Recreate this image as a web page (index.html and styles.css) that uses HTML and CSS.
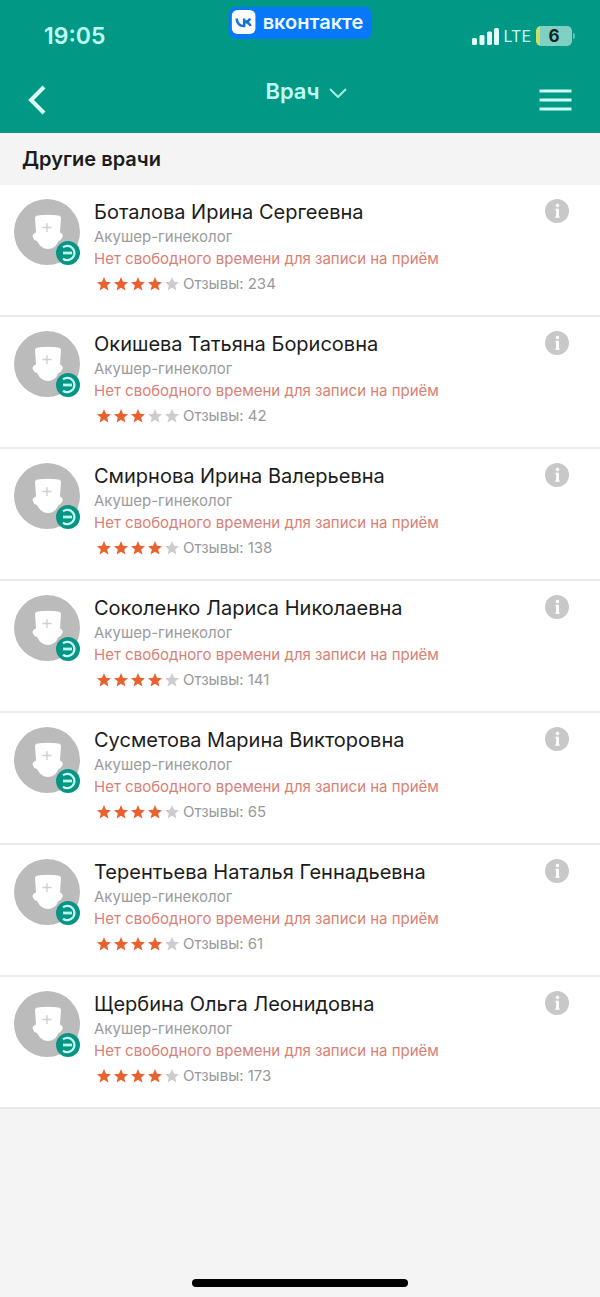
FILE: index.html
```html
<!DOCTYPE html>
<html lang="ru">
<head>
<meta charset="utf-8">
<meta name="viewport" content="width=device-width, initial-scale=1">
<title>Врач</title>
<link rel="stylesheet" href="styles.css">
</head>
<body>
<svg class="sprite" aria-hidden="true">
  <symbol id="avatar" viewBox="0 0 66 66">
    <circle cx="33" cy="33" r="33" fill="#bbb"/>
    <path d="M21 19Q21 17 24 16.500Q34 15 44 16.500Q47 17 47 19L46 33.500Q49.500 35 48.500 38Q47.500 41 44.500 42Q41 50 34 50Q27 50 23 42Q19.500 41 18.700 38Q18 35 22 33.500Z" fill="#fff"/>
    <path d="M33 24v9M28.500 28.500h9" stroke="#cfcfcf" stroke-width="1.300"/>
  </symbol>
  <symbol id="mark" viewBox="0 0 24 24">
    <circle cx="12" cy="12" r="12" fill="#079484"/>
    <path d="M7 6.200A7.200 7.200 0 1 1 7 17.800" fill="none" stroke="#c4fff5" stroke-width="2.300"/>
    <path d="M7 12h9" stroke="#b5f7eb" stroke-width="2.800"/>
  </symbol>
  <symbol id="star" viewBox="0 0 14 14">
    <path d="M7 0l2 4.800 5 .4-3.800 3.300 1.200 5L7 10.800 2.600 13.500l1.200-5L0 5.200l5-.4z"/>
  </symbol>
  <symbol id="info" viewBox="0 0 24 24">
    <circle cx="12" cy="12" r="12" fill="#c8c8c8"/>
    <circle cx="12.500" cy="6.500" r="1.700" fill="#fff"/>
    <path d="M10.500 10.500h2M10.500 18h4" stroke="#fff" stroke-width="1.500"/>
    <path d="M12.500 9.800v8.900" stroke="#fff" stroke-width="2.800"/>
  </symbol>
</svg>
<div class="screen">
  <header class="header">
    <div class="status">
      <time class="clock">19:05</time>
      <div class="vk">
        <svg class="vk-logo" viewBox="0 0 24 24" aria-hidden="true">
          <rect width="24" height="24" rx="6" fill="#fff"/>
          <path d="M5 8.500Q5.500 16 12.500 16V8.500M18.500 8.500Q17 12 13 12Q17.500 12.500 19 16" fill="none" stroke="#1473d8" stroke-width="2.500"/>
        </svg>
        <span>вконтакте</span>
      </div>
      <div class="signals">
        <svg class="bars" viewBox="0 0 27 18" fill="#e2fffa" aria-hidden="true">
          <rect y="11" width="5" height="7" rx="1.500"/><rect x="7.500" y="8" width="5" height="10" rx="1.500"/><rect x="15" y="4.500" width="5" height="13.500" rx="1.500"/><rect x="22" y="1" width="5" height="17" rx="1.500"/>
        </svg>
        <span class="network">LTE</span>
        <span class="battery">6</span>
      </div>
    </div>
    <nav class="nav">
      <button class="icon-button" aria-label="Назад"><svg class="back" viewBox="0 0 18 30" aria-hidden="true"><path d="M16 2L3 15l13 13" fill="none" stroke="#d9fff8" stroke-width="4"/></svg></button>
      <button class="title">Врач <svg class="chevron" viewBox="0 0 18 10" aria-hidden="true"><path d="M1 1l8 8 8-8" fill="none" stroke="#a5f0e3" stroke-width="2"/></svg></button>
      <button class="icon-button" aria-label="Меню"><svg class="menu" viewBox="0 0 32 24" aria-hidden="true"><path d="M0 3h32M0 12h32M0 21h32" stroke="#cffff6" stroke-width="3"/></svg></button>
    </nav>
  </header>
  <main>
    <h1 class="section">Другие врачи</h1>
    <ul class="doctors">
      <li class="doctor">
        <div class="photo"><svg class="avatar"><use href="#avatar"/></svg><svg class="mark"><use href="#mark"/></svg></div>
        <div class="details"><h2 class="name">Боталова Ирина Сергеевна</h2><p class="role">Акушер-гинеколог</p><p class="notice">Нет свободного времени для записи на приём</p>
          <div class="rating"><div class="stars" role="img" aria-label="4 из 5"><svg><use href="#star"/></svg><svg><use href="#star"/></svg><svg><use href="#star"/></svg><svg><use href="#star"/></svg><svg class="off"><use href="#star"/></svg></div><span>Отзывы: 234</span></div></div>
        <button class="info" aria-label="Информация"><svg><use href="#info"/></svg></button>
      </li>
      <li class="doctor">
        <div class="photo"><svg class="avatar"><use href="#avatar"/></svg><svg class="mark"><use href="#mark"/></svg></div>
        <div class="details"><h2 class="name">Окишева Татьяна Борисовна</h2><p class="role">Акушер-гинеколог</p><p class="notice">Нет свободного времени для записи на приём</p>
          <div class="rating"><div class="stars" role="img" aria-label="3 из 5"><svg><use href="#star"/></svg><svg><use href="#star"/></svg><svg><use href="#star"/></svg><svg class="off"><use href="#star"/></svg><svg class="off"><use href="#star"/></svg></div><span>Отзывы: 42</span></div></div>
        <button class="info" aria-label="Информация"><svg><use href="#info"/></svg></button>
      </li>
      <li class="doctor">
        <div class="photo"><svg class="avatar"><use href="#avatar"/></svg><svg class="mark"><use href="#mark"/></svg></div>
        <div class="details"><h2 class="name">Смирнова Ирина Валерьевна</h2><p class="role">Акушер-гинеколог</p><p class="notice">Нет свободного времени для записи на приём</p>
          <div class="rating"><div class="stars" role="img" aria-label="4 из 5"><svg><use href="#star"/></svg><svg><use href="#star"/></svg><svg><use href="#star"/></svg><svg><use href="#star"/></svg><svg class="off"><use href="#star"/></svg></div><span>Отзывы: 138</span></div></div>
        <button class="info" aria-label="Информация"><svg><use href="#info"/></svg></button>
      </li>
      <li class="doctor">
        <div class="photo"><svg class="avatar"><use href="#avatar"/></svg><svg class="mark"><use href="#mark"/></svg></div>
        <div class="details"><h2 class="name">Соколенко Лариса Николаевна</h2><p class="role">Акушер-гинеколог</p><p class="notice">Нет свободного времени для записи на приём</p>
          <div class="rating"><div class="stars" role="img" aria-label="4 из 5"><svg><use href="#star"/></svg><svg><use href="#star"/></svg><svg><use href="#star"/></svg><svg><use href="#star"/></svg><svg class="off"><use href="#star"/></svg></div><span>Отзывы: 141</span></div></div>
        <button class="info" aria-label="Информация"><svg><use href="#info"/></svg></button>
      </li>
      <li class="doctor">
        <div class="photo"><svg class="avatar"><use href="#avatar"/></svg><svg class="mark"><use href="#mark"/></svg></div>
        <div class="details"><h2 class="name">Сусметова Марина Викторовна</h2><p class="role">Акушер-гинеколог</p><p class="notice">Нет свободного времени для записи на приём</p>
          <div class="rating"><div class="stars" role="img" aria-label="4 из 5"><svg><use href="#star"/></svg><svg><use href="#star"/></svg><svg><use href="#star"/></svg><svg><use href="#star"/></svg><svg class="off"><use href="#star"/></svg></div><span>Отзывы: 65</span></div></div>
        <button class="info" aria-label="Информация"><svg><use href="#info"/></svg></button>
      </li>
      <li class="doctor">
        <div class="photo"><svg class="avatar"><use href="#avatar"/></svg><svg class="mark"><use href="#mark"/></svg></div>
        <div class="details"><h2 class="name">Терентьева Наталья Геннадьевна</h2><p class="role">Акушер-гинеколог</p><p class="notice">Нет свободного времени для записи на приём</p>
          <div class="rating"><div class="stars" role="img" aria-label="4 из 5"><svg><use href="#star"/></svg><svg><use href="#star"/></svg><svg><use href="#star"/></svg><svg><use href="#star"/></svg><svg class="off"><use href="#star"/></svg></div><span>Отзывы: 61</span></div></div>
        <button class="info" aria-label="Информация"><svg><use href="#info"/></svg></button>
      </li>
      <li class="doctor">
        <div class="photo"><svg class="avatar"><use href="#avatar"/></svg><svg class="mark"><use href="#mark"/></svg></div>
        <div class="details"><h2 class="name">Щербина Ольга Леонидовна</h2><p class="role">Акушер-гинеколог</p><p class="notice">Нет свободного времени для записи на приём</p>
          <div class="rating"><div class="stars" role="img" aria-label="4 из 5"><svg><use href="#star"/></svg><svg><use href="#star"/></svg><svg><use href="#star"/></svg><svg><use href="#star"/></svg><svg class="off"><use href="#star"/></svg></div><span>Отзывы: 173</span></div></div>
        <button class="info" aria-label="Информация"><svg><use href="#info"/></svg></button>
      </li>
    </ul>
  </main>
  <footer class="footer"><div class="home"></div></footer>
</div>
</body>
</html>
```
FILE: styles.css
```css
* { box-sizing: border-box; }
body { margin: 0; background: #f4f4f4; color: #1c1c1c; font-family: Inter, "Liberation Sans", sans-serif; }
h1, h2, p, ul { margin: 0; padding: 0; }
button { padding: 0; border: 0; background: none; color: inherit; font: inherit; cursor: pointer; }
svg { display: block; }
.sprite { position: absolute; width: 0; height: 0; }
.screen { display: flex; flex-direction: column; min-height: 100vh; }
.header { background: #019985; color: #c0fff3; }
.status { position: relative; display: flex; align-items: center; justify-content: space-between; height: 67px; padding: 5px 25px 0 44px; }
.clock { font-size: 23px; font-weight: 600; }
.vk { position: absolute; top: 7px; left: 50%; transform: translateX(-50%); display: flex; align-items: center; gap: 7px; height: 32px; padding: 0 8px 2px 3px; border-radius: 7px; background: #0878fa; color: #edf8ff; font-size: 20px; font-weight: 600; }
.vk-logo { width: 24px; height: 24px; }
.signals { display: flex; align-items: center; gap: 5px; }
.bars { width: 27px; height: 18px; }
.network { font-size: 16px; }
.battery { position: relative; width: 36px; height: 20px; margin-right: 3px; border-radius: 5px; background: linear-gradient(90deg, #c9df6c 4px, #80d0c3 4px); color: #122421; font-size: 17px; font-weight: 700; line-height: 20px; text-align: center; }
.battery::after { content: ""; position: absolute; top: 7px; right: -3px; width: 2px; height: 6px; border-radius: 0 2px 2px 0; background: #66bfb1; }
.nav { display: flex; align-items: center; justify-content: space-between; height: 66px; padding: 0 28px; }
.icon-button { width: 34px; display: flex; }
.icon-button:last-child { justify-content: flex-end; }
.back { width: 18px; height: 30px; }
.menu { width: 33px; height: 24px; }
.title { display: flex; align-items: center; gap: 9px; margin-bottom: 18px; padding-left: 12px; font-size: 22px; font-weight: 600; }
.chevron { width: 18px; height: 10px; margin-top: 4px; }
.section { padding: 0 22px; font-size: 20px; font-weight: 600; line-height: 52px; }
.doctors { list-style: none; }
.doctor { display: flex; align-items: flex-start; gap: 14px; padding: 14px 31px 20px 14px; border-bottom: 2px solid #e9e9e9; background: #fff; }
.photo { position: relative; flex: none; }
.avatar { width: 66px; height: 66px; }
.mark { position: absolute; right: 0; bottom: 0; width: 24px; height: 24px; }
.details { flex: 1; min-width: 0; }
.name { font-size: 20px; font-weight: 400; line-height: 26px; }
.role, .notice, .rating { font-size: 15px; line-height: 22px; }
.role { padding-top: 1px; color: #9b9b9b; }
.notice { color: #d98075; }
.rating { display: flex; align-items: center; gap: 4px; padding: 3px 0 0 3px; color: #999; }
.stars { display: flex; gap: 3px; }
.stars svg { width: 14px; height: 14px; fill: #e8622f; }
.stars .off { fill: #ccc; }
.info svg { width: 24px; height: 24px; }
.footer { display: flex; flex: 1; align-items: flex-end; justify-content: center; padding: 24px 0 10px; }
.home { width: 36%; height: 8px; border-radius: 4px; background: #000; }
```
